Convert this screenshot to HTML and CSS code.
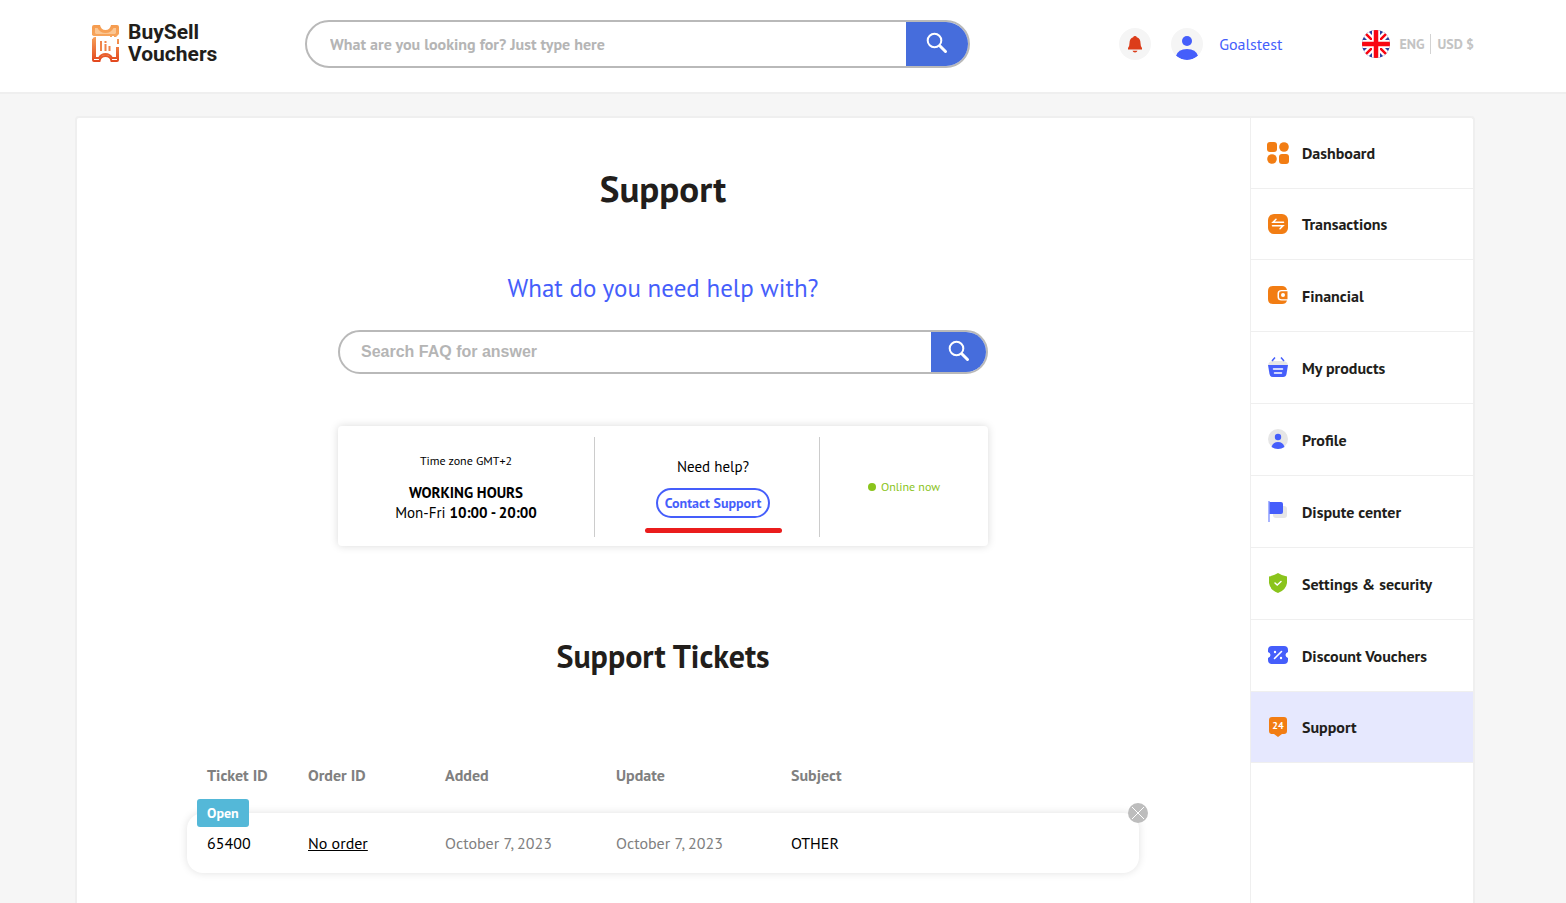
FILE: index.html
```html
<!DOCTYPE html>
<html lang="en">
<head>
    <meta charset="UTF-8">
    <meta name="viewport" content="width=device-width, initial-scale=1.0">
    <title>Support - BuySell Vouchers</title>
    <link rel="stylesheet" href="styles.css">
</head>
<body>
    <header class="header">
        <div class="container header-inner">
            <a href="#" class="logo">
                <svg width="29" height="39" viewBox="0 0 29 39" aria-hidden="true">
                    <defs>
                        <linearGradient id="logoFill" x1="0" y1="0" x2="0" y2="39" gradientUnits="userSpaceOnUse">
                            <stop offset="0" stop-color="#f59a4c"/>
                            <stop offset="0.300" stop-color="#f7a55c"/>
                            <stop offset="1" stop-color="#e2421a"/>
                        </linearGradient>
                    </defs>
                    <path d="M1 11V3Q1 1 3 1H9Q10 6 14.500 6T20 1H26Q28 1 28 3V10L25 13H4Z" fill="url(#logoFill)"/>
                    <path d="M4 4H6.500Q9 9 14.500 9T22.500 4H25V9L24 10H5L4 9Z" fill="#fbc692"/>
                    <path d="M2 15L4 14V34H8Q10 30 14.500 30T21 34H26V23" fill="none" stroke="url(#logoFill)" stroke-width="2"/>
                    <path d="M2 15V36Q2 37 3 37H8.500Q9.500 32 14.500 32T20.500 37H26Q27 37 27 36V23M27 15V20" fill="none" stroke="url(#logoFill)" stroke-width="2"/>
                    <path d="M1 12.500H19M21 12.500H23" stroke="#fff" stroke-width="1"/>
                    <path d="M10 17V27M14.500 17V19M14.500 20V27M18.500 22V27" stroke="#f0844a" stroke-width="2"/>
                </svg>
                <span class="logo-text">BuySell<br>Vouchers</span>
            </a>
            <form class="search header-search">
                <input type="text" class="search-input" placeholder="What are you looking for? Just type here" aria-label="Search vouchers">
                <button type="submit" class="search-button" aria-label="Search">
                    <svg width="22" height="22" viewBox="0 0 22 22" fill="none" stroke="#fff" stroke-linecap="round">
                        <circle cx="8.500" cy="8.500" r="6.800" stroke-width="2"/>
                        <path d="M14 14L19.500 19.500" stroke-width="3"/>
                    </svg>
                </button>
            </form>
            <div class="user-nav">
                <button type="button" class="round-button" aria-label="Notifications">
                    <svg width="32" height="32" viewBox="0 0 32 32" fill="#dc3d1a">
                        <path d="M16 8Q17.500 8 17.800 9.200Q21.500 10.500 21.500 15Q21.500 18.500 23 20V21.500H9V20Q10.500 18.500 10.500 15Q10.500 10.500 14.200 9.200Q14.500 8 16 8Z"/>
                        <path d="M13.500 22.700H18.500Q18 24.500 16 24.500T13.500 22.700Z"/>
                    </svg>
                </button>
                <a href="#" class="user-link">
                    <svg class="round-button" width="32" height="32" viewBox="0 0 32 32" fill="#455efb">
                        <circle cx="16" cy="13" r="5"/>
                        <path d="M5 28Q7 21 16 21T27 28Q22 32 16 32T5 28Z"/>
                    </svg>
                    Goalstest
                </a>
            </div>
            <div class="locale">
                <svg width="28" height="28" viewBox="0 0 28 28" aria-hidden="true">
                    <clipPath id="flagClip"><circle cx="14" cy="14" r="14"/></clipPath>
                    <g clip-path="url(#flagClip)">
                        <path d="M0 0H28V28H0Z" fill="#2b3f9e"/>
                        <path d="M0 0L28 28M28 0L0 28" stroke="#fff" stroke-width="7"/>
                        <path d="M0 0L28 28M28 0L0 28" stroke="#f90613" stroke-width="2.500"/>
                        <path d="M14 0V28M0 14H28" stroke="#fff" stroke-width="8"/>
                        <path d="M14 0V28M0 14H28" stroke="#f90613" stroke-width="4.500"/>
                    </g>
                </svg>
                <button type="button" class="locale-button">ENG</button>
                <button type="button" class="locale-button">USD $</button>
            </div>
        </div>
    </header>

    <div class="page">
        <main class="content">
            <h1>Support</h1>
            <h2 class="question">What do you need help with?</h2>

            <form class="search faq-search">
                <input type="text" class="search-input" placeholder="Search FAQ for answer" aria-label="Search FAQ">
                <button type="submit" class="search-button" aria-label="Search">
                    <svg width="22" height="22" viewBox="0 0 22 22" fill="none" stroke="#fff" stroke-linecap="round">
                        <circle cx="8.500" cy="8.500" r="6.800" stroke-width="2"/>
                        <path d="M14 14L19.500 19.500" stroke-width="3"/>
                    </svg>
                </button>
            </form>

            <section class="info">
                <div class="info-hours">
                    <p class="info-zone">Time zone GMT+2</p>
                    <p><b>WORKING HOURS</b></p>
                    <p>Mon-Fri <b>10:00 - 20:00</b></p>
                </div>
                <div class="info-help">
                    <p>Need help?</p>
                    <button type="button" class="contact-button">Contact Support</button>
                    <span class="red-line"></span>
                </div>
                <div class="info-status">
                    <span class="dot"></span>Online now
                </div>
            </section>

            <h2 class="tickets-title">Support Tickets</h2>

            <table class="tickets">
                <thead>
                    <tr>
                        <th>Ticket ID</th>
                        <th>Order ID</th>
                        <th>Added</th>
                        <th>Update</th>
                        <th>Subject</th>
                    </tr>
                </thead>
                <tbody>
                    <tr>
                        <td><span class="badge">Open</span>65400</td>
                        <td><a href="#">No order</a></td>
                        <td class="date">October 7, 2023</td>
                        <td class="date">October 7, 2023</td>
                        <td>OTHER
                            <button type="button" class="close-button" aria-label="Close ticket">
                                <svg width="20" height="20" viewBox="0 0 20 20" stroke="#fff" stroke-width="1"><path d="M4 4L16 16M16 4L4 16"/></svg>
                            </button>
                        </td>
                    </tr>
                </tbody>
            </table>
        </main>

        <nav class="menu">
            <a href="#" class="menu-item short">
                <svg width="24" height="24" viewBox="0 0 24 24" fill="#f27d13">
                    <rect x="1" y="1" width="10" height="10" rx="3"/>
                    <circle cx="18" cy="6" r="4.800"/>
                    <circle cx="6" cy="18" r="4.800"/>
                    <rect x="13" y="13" width="10" height="10" rx="3"/>
                </svg>
                Dashboard
            </a>
            <a href="#" class="menu-item short">
                <svg width="24" height="24" viewBox="0 0 24 24">
                    <rect x="2" y="2" width="20" height="20" rx="6" fill="#f27d13"/>
                    <path d="M17.500 10.300H7L10 7.300M6.500 13.700H17L14 16.700" fill="none" stroke="#fff" stroke-width="1.500" stroke-linecap="round"/>
                </svg>
                Transactions
            </a>
            <a href="#" class="menu-item">
                <svg width="24" height="24" viewBox="0 0 24 24">
                    <path d="M7 2H16Q20 2 21 6H15.500Q11.500 6 11.500 9.500V13Q11.500 16.500 15.500 16.500H21Q20 20 16 20H7Q2 20 2 15V7Q2 2 7 2Z" fill="#f27d13"/>
                    <path d="M21.500 7.200H15.500Q13 7.200 13 9.500V13Q13 15.300 15.500 15.300H21.500Z" fill="#f27d13"/>
                    <circle cx="17" cy="11" r="2" fill="#fff"/>
                </svg>
                Financial
            </a>
            <a href="#" class="menu-item">
                <svg width="24" height="24" viewBox="0 0 24 24">
                    <path d="M2 9Q3 5 7 5H17Q21 5 22 9Z" fill="#e6e6e6"/>
                    <path d="M2 9H22L20.500 18Q20 21 17 21H7Q4 21 3.500 18Z" fill="#455efb"/>
                    <path d="M6 5L9 1.500M18 5L15 1.500" stroke="#455efb" stroke-width="1.500"/>
                    <path d="M7.500 13H16.500M8.500 17H15.500" stroke="#fff" stroke-width="1.500" stroke-linecap="round"/>
                </svg>
                My products
            </a>
            <a href="#" class="menu-item">
                <svg width="24" height="24" viewBox="0 0 24 24">
                    <circle cx="12" cy="11" r="10" fill="#e6e6e6"/>
                    <circle cx="12" cy="9" r="3.200" fill="#455efb"/>
                    <path d="M5.500 19Q7 14 12 14T18.500 19Q15.500 21 12 21T5.500 19Z" fill="#455efb"/>
                </svg>
                Profile
            </a>
            <a href="#" class="menu-item">
                <svg width="24" height="24" viewBox="0 0 24 24">
                    <rect x="7" y="6" width="14" height="12" rx="3" fill="#e6e6e6"/>
                    <path d="M3 1V22" stroke="#a9b5ff" stroke-width="2"/>
                    <path d="M3.500 2H15Q17 2 17 4V12Q17 14 15 14H3.500Z" fill="#455efb"/>
                </svg>
                Dispute center
            </a>
            <a href="#" class="menu-item">
                <svg width="24" height="24" viewBox="0 0 24 24">
                    <path d="M12 1Q15 3 21 4.500V11Q20 18 12 21Q4 18 3 11V4.500Q9 3 12 1Z" fill="#8ac41c"/>
                    <path d="M9 11L11.200 13L15 9.500" fill="none" stroke="#fff" stroke-width="1.500" stroke-linecap="round"/>
                </svg>
                Settings &amp; security
            </a>
            <a href="#" class="menu-item">
                <svg width="24" height="24" viewBox="0 0 24 24">
                    <path d="M6 2H18Q22 2 22 6V8Q19.500 9 19.500 11T22 14V16Q22 20 18 20H6Q2 20 2 16V14Q4.500 13 4.500 11T2 8V6Q2 2 6 2Z" fill="#455efb"/>
                    <path d="M8.500 14.500L15.500 7.500" stroke="#fff" stroke-width="1.600" stroke-linecap="round"/>
                    <circle cx="9" cy="8" r="1.200" fill="#fff"/>
                    <circle cx="15" cy="14" r="1.200" fill="#fff"/>
                </svg>
                Discount Vouchers
            </a>
            <a href="#" class="menu-item short active">
                <svg width="24" height="24" viewBox="0 0 24 24">
                    <path d="M6 2H18Q21 2 21 5V16Q21 19 18 19H16L12 22L8 19H6Q3 19 3 16V5Q3 2 6 2Z" fill="#f27d13"/>
                    <text x="12" y="14" text-anchor="middle" class="icon-text">24</text>
                </svg>
                Support
            </a>
        </nav>
    </div>
</body>
</html>
```
FILE: styles.css
```css
* {
    box-sizing: border-box;
}
body {
    margin: 0;
    background-color: #f6f6f6;
    color: #000;
    font-family: "PT Sans", "Noto Sans", sans-serif;
    font-size: 16px;
    line-height: 20px;
}
h1, h2, p {
    margin: 0;
}
a {
    color: inherit;
}
button {
    padding: 0;
    border: none;
    background: none;
    font-family: inherit;
    cursor: pointer;
}
svg {
    display: block;
    flex-shrink: 0;
}
.container {
    margin: 0 92px 0 76px;
}

/* Header */
.header {
    background-color: #fff;
    border-bottom: 2px solid #efefef;
}
.header-inner {
    display: flex;
    align-items: center;
    height: 92px;
    padding-bottom: 4px;
}
.logo {
    display: flex;
    align-items: center;
    gap: 8px;
    width: 229px;
    padding: 0 0 2px 15px;
    color: #221e1b;
    text-decoration: none;
}
.logo-text {
    font-family: Roboto, sans-serif;
    font-size: 21px;
    font-weight: bold;
    line-height: 22px;
}
.search {
    display: flex;
    overflow: hidden;
    border: 2px solid #b9b9b9;
    border-radius: 24px;
    background-color: #fff;
}
.search-input {
    flex: 1;
    min-width: 0;
    padding: 0 23px;
    border: none;
    outline: none;
    background: none;
    font-family: inherit;
    font-size: 16px;
    font-weight: bold;
}
.search-input::placeholder {
    color: #b5b5b5;
}
.search-button {
    display: flex;
    align-items: center;
    justify-content: center;
    width: 62px;
    padding-bottom: 2px;
    background-color: #466ddc;
}
.header-search {
    flex: 0 1 665px;
    height: 48px;
}
.user-nav {
    display: flex;
    align-items: center;
    gap: 20px;
    margin-left: auto;
}
.round-button {
    border-radius: 50%;
    background-color: #f5f5f5;
}
.user-link {
    display: flex;
    align-items: center;
    gap: 16px;
    color: #455efb;
    text-decoration: none;
}
.locale {
    display: flex;
    align-items: center;
    margin-left: 80px;
}
.locale svg {
    margin-right: 9px;
}
.locale-button {
    color: #c3c3c3;
    font-size: 14px;
    font-weight: bold;
    line-height: 20px;
}
.locale-button + .locale-button {
    margin-left: 6px;
    padding-left: 6px;
    border-left: 1px solid #d3d3d3;
}

/* Page */
.page {
    display: flex;
    min-height: calc(100vh - 116px);
    margin: 22px 91px 0 75px;
    border: 2px solid #efefef;
    border-bottom: none;
    border-radius: 4px 4px 0 0;
    background-color: #fff;
}
.content {
    flex: 1;
    display: flex;
    flex-direction: column;
    align-items: center;
    padding: 46px 111px 28px 110px;
}
h1 {
    color: #221e1b;
    font-size: 37px;
    line-height: 48px;
}
.question {
    margin-top: 60px;
    color: #455efb;
    font-size: 25px;
    font-weight: normal;
    line-height: 32px;
}
.faq-search {
    width: 100%;
    max-width: 650px;
    height: 44px;
    margin-top: 26px;
}
.faq-search .search-input {
    padding: 0 21px;
    font-family: "Liberation Sans", Arial, sans-serif;
}
.faq-search .search-button {
    width: 55px;
}

/* Working hours and contacts */
.info {
    display: grid;
    grid-template-columns: 257fr 225fr 168fr;
    width: 100%;
    max-width: 650px;
    margin-top: 52px;
    padding: 11px 0 9px;
    border-radius: 4px;
    box-shadow: 0 0 8px rgba(0, 0, 0, 0.15);
    font-size: 15px;
    text-align: center;
}
.info-hours {
    padding: 14px 0;
    border-right: 1px solid #ccc;
}
.info-zone {
    margin-bottom: 12px;
    font-size: 12px;
}
.info-help {
    display: flex;
    flex-direction: column;
    align-items: center;
    padding: 20px 0 0 12px;
    border-right: 1px solid #ccc;
}
.contact-button {
    height: 30px;
    margin-top: 11px;
    padding: 0 7px;
    border: 2px solid #455efb;
    border-radius: 15px;
    color: #455efb;
    font-size: 14px;
    font-weight: bold;
}
.red-line {
    width: 137px;
    height: 5px;
    margin-top: 10px;
    border-radius: 3px;
    background-color: #ea1c1c;
}
.info-status {
    display: flex;
    align-items: center;
    justify-content: center;
    gap: 5px;
    color: #8ac41c;
    font-size: 12px;
}
.dot {
    width: 8px;
    height: 8px;
    border-radius: 50%;
    background-color: #8ac41c;
}

/* Tickets */
.tickets-title {
    margin-top: 90px;
    color: #221e1b;
    font-size: 32px;
    line-height: 40px;
}
.tickets {
    display: block;
    width: 100%;
    max-width: 952px;
    margin-top: 89px;
}
.tickets thead,
.tickets tbody {
    display: block;
}
.tickets tr {
    display: grid;
    grid-template-columns: 101fr 137fr 171fr 175fr 348fr;
    padding: 0 0 0 20px;
}
.tickets th,
.tickets td {
    padding: 0;
    text-align: left;
}
.tickets th {
    color: #808080;
}
.tickets tbody tr {
    position: relative;
    margin-top: 28px;
    padding: 20px 0 20px 20px;
    border-radius: 16px;
    box-shadow: 0 0 8px rgba(0, 0, 0, 0.12);
}
.tickets .date {
    color: #808080;
}
.badge {
    position: absolute;
    top: -14px;
    left: 10px;
    padding: 4px 10px;
    border-radius: 3px;
    background-color: #54b8d8;
    color: #fff;
    font-size: 14px;
    font-weight: bold;
}
.close-button {
    position: absolute;
    top: -10px;
    right: -9px;
    border-radius: 50%;
    background-color: #bdbdbd;
}

/* Side menu */
.menu {
    flex: 0 0 223px;
    border-left: 1px solid #efefef;
}
.menu-item {
    display: flex;
    align-items: center;
    gap: 12px;
    height: 72px;
    padding-left: 15px;
    border-bottom: 1px solid #efefef;
    color: #221e1b;
    font-weight: 600;
    text-decoration: none;
}
.menu-item.short {
    height: 71px;
}
.menu-item.active {
    background-color: #e6e8fe;
}
.icon-text {
    fill: #fff;
    font-size: 10px;
    font-weight: bold;
}
```
